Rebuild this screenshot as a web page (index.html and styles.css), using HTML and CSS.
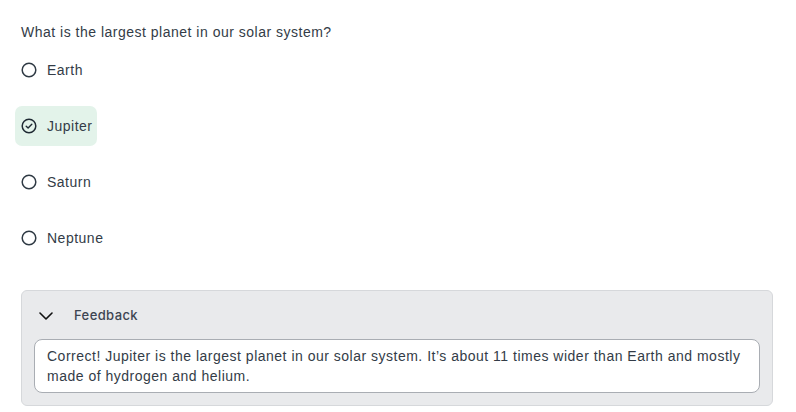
FILE: index.html
```html
<!DOCTYPE html>
<html lang="en">
<head>
<meta charset="utf-8">
<title>Quiz</title>
<link rel="stylesheet" href="styles.css">
</head>
<body>
<main class="quiz">
  <p class="question">What is the largest planet in our solar system?</p>
  <ul class="options">
    <li class="option">
      <svg class="radio" viewBox="0 0 16 16" width="16" height="16"><circle cx="8" cy="8" r="6.8" fill="none" stroke="#2f3a44" stroke-width="1.5"/></svg>
      <span>Earth</span>
    </li>
    <li class="option option--selected">
      <svg class="radio" viewBox="0 0 16 16" width="16" height="16"><circle cx="8" cy="8" r="6.8" fill="none" stroke="#1f2a33" stroke-width="1.5"/><path d="M5.2 8.2 L7.1 10 L10.8 6.2" fill="none" stroke="#1f2a33" stroke-width="1.4" stroke-linecap="round" stroke-linejoin="round"/></svg>
      <span>Jupiter</span>
    </li>
    <li class="option">
      <svg class="radio" viewBox="0 0 16 16" width="16" height="16"><circle cx="8" cy="8" r="6.8" fill="none" stroke="#2f3a44" stroke-width="1.5"/></svg>
      <span>Saturn</span>
    </li>
    <li class="option">
      <svg class="radio" viewBox="0 0 16 16" width="16" height="16"><circle cx="8" cy="8" r="6.8" fill="none" stroke="#2f3a44" stroke-width="1.5"/></svg>
      <span>Neptune</span>
    </li>
  </ul>
  <section class="feedback">
    <div class="feedback__header">
      <svg class="chevron" viewBox="0 0 14 8" width="14" height="8"><path d="M1 1 L7 7 L13 1" fill="none" stroke="#111" stroke-width="1.6" stroke-linecap="round" stroke-linejoin="round"/></svg>
      <span class="feedback__title">Feedback</span>
    </div>
    <div class="feedback__body">Correct! Jupiter is the largest planet in our solar system. It’s about 11 times wider than Earth and mostly made of hydrogen and helium.</div>
  </section>
</main>
</body>
</html>
```
FILE: styles.css
```css
html, body {
  margin: 0;
  padding: 0;
  background: #ffffff;
}

.quiz {
  padding: 22px 23px 0 21px;
  font-family: "Liberation Sans", Arial, sans-serif;
  color: #333c47;
}

.question {
  margin: 0;
  font-size: 14px;
  line-height: 20px;
  letter-spacing: 0.5px;
}

.options {
  list-style: none;
  margin: 8px 0 0 -6px;
  padding: 0;
  display: flex;
  flex-direction: column;
  align-items: flex-start;
  gap: 16px;
}

.option {
  display: flex;
  align-items: center;
  height: 40px;
  padding: 0 4px 0 6px;
  gap: 10px;
  border-radius: 7px;
  font-size: 14px;
  letter-spacing: 0.5px;
}

.radio {
  display: block;
  flex: none;
}

.option--selected {
  background: #e3f3ea;
}

.feedback {
  margin-top: 32px;
  background: #e9eaec;
  border: 1px solid #d6d8db;
  border-radius: 6px;
  padding: 0 12px 12px;
}

.feedback__header {
  display: flex;
  align-items: center;
  height: 48px;
  padding-left: 5px;
}

.chevron {
  display: block;
  margin-top: 1px;
}

.feedback__title {
  margin-left: 21px;
  font-family: Inter, "Open Sans", sans-serif;
  font-size: 13px;
  font-weight: 500;
  letter-spacing: 0.4px;
  color: #3d4552;
}

.feedback__body {
  background: #ffffff;
  border: 1px solid #a9adb3;
  border-radius: 8px;
  padding: 6px 12px;
  font-size: 14px;
  line-height: 20px;
  letter-spacing: 0.5px;
  color: #333c47;
}
```
